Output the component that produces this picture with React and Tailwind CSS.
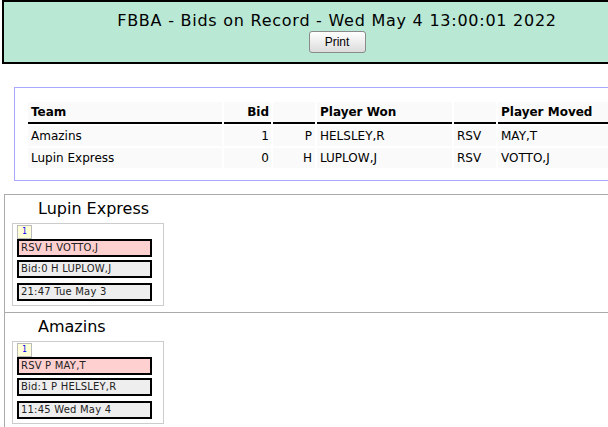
import React from 'react';

const bids = [
    { team: 'Amazins', bid: 1, pos: 'P', won: 'HELSLEY,R', type: 'RSV', moved: 'MAY,T' },
    { team: 'Lupin Express', bid: 0, pos: 'H', won: 'LUPLOW,J', type: 'RSV', moved: 'VOTTO,J' },
];

const rosters = [
    { team: 'Lupin Express', move: 'RSV H VOTTO,J', bid: 'Bid:0 H LUPLOW,J', time: '21:47 Tue May 3' },
    { team: 'Amazins', move: 'RSV P MAY,T', bid: 'Bid:1 P HELSLEY,R', time: '11:45 Wed May 4' },
];

const RosterCard = ({ r, first }) => (
    <div className={`border border-[#aaaaaa] pl-[7px] pt-[4px] pb-[6px] ${first ? '' : 'border-t-0'}`}>
        <div className="pl-[26px] text-[16px] leading-[20px] text-black">{r.team}</div>
        <div className="mt-[4px] w-[152px] border border-[#cccccc] pl-[4px] pt-[1px] pb-[4px]">
            <div className="w-[15px] h-[14px] border border-[#bbbbbb] bg-[#ffffd8] flex items-center justify-center text-[8px] leading-none text-[#0000ee] font-['DejaVu_Sans_Mono',monospace]">1</div>
            <div className="w-[135px] h-[18px] border-2 border-black bg-[#ffd0d0] px-[2px] text-[10px] leading-[14px] tracking-[0.2px] text-[#222]">{r.move}</div>
            <div className="mt-[3px] w-[135px] h-[18px] border-2 border-black bg-[#eeeeee] px-[2px] text-[10px] leading-[14px] tracking-[0.2px] text-[#222]">{r.bid}</div>
            <div className="mt-[5px] w-[135px] h-[18px] border-2 border-black bg-[#eeeeee] px-[2px] text-[10px] leading-[14px] tracking-[0.2px] text-[#222]">{r.time}</div>
        </div>
    </div>
);

export default function App() {
    return (
        <div className="w-[608px] h-[427px] overflow-hidden bg-white font-['DejaVu_Sans',sans-serif]">
            <div className="w-[700px]">
                {/* header */}
                <div className="ml-[2px] w-[670px] border-2 border-black bg-[#b9e8d5] pt-[9px] pb-[9px] flex flex-col items-center">
                    <div className="text-[16px] leading-[20px] tracking-[0.75px] text-black">FBBA - Bids on Record - Wed May 4 13:00:01 2022</div>
                    <button className="w-[57px] h-[22px] rounded-[3px] border border-[#8a8a8a] bg-gradient-to-b from-white to-[#dcdcdc] text-[12px] text-black font-['Liberation_Sans',Arial,sans-serif]">Print</button>
                </div>

                {/* bids table */}
                <div className="mt-[23px] ml-[14px] border border-[#a8a8ff] pl-[11px] pt-[12px] pb-[10px]">
                    <table className="border-separate border-spacing-[2px] text-[12px] text-black">
                        <thead>
                            <tr className="font-bold">
                                <th className="w-[194px] h-[22px] bg-[#fafafa] border-b-2 border-black px-[3px] text-left">Team</th>
                                <th className="w-[47px] bg-[#fafafa] border-b-2 border-black px-[2px] text-right">Bid</th>
                                <th className="w-[42px] bg-[#fafafa] border-b-2 border-black"></th>
                                <th className="w-[135px] bg-[#fafafa] border-b-2 border-black px-[3px] text-left">Player Won</th>
                                <th className="w-[42px] bg-[#fafafa] border-b-2 border-black"></th>
                                <th className="w-[150px] bg-[#fafafa] border-b-2 border-black px-[3px] text-left">Player Moved</th>
                            </tr>
                        </thead>
                        <tbody>
                            {bids.map((b) => (
                                <tr key={b.team} className="h-[20px]">
                                    <td className="bg-[#fafafa] px-[3px]">{b.team}</td>
                                    <td className="bg-[#fafafa] px-[2px] text-right">{b.bid}</td>
                                    <td className="bg-[#fafafa] px-[3px] text-right">{b.pos}</td>
                                    <td className="bg-[#fafafa] px-[3px]">{b.won}</td>
                                    <td className="bg-[#fafafa] px-[3px]">{b.type}</td>
                                    <td className="bg-[#fafafa] px-[3px]">{b.moved}</td>
                                </tr>
                            ))}
                        </tbody>
                    </table>
                </div>

                {/* rosters */}
                <div className="mt-[13px] ml-[4px]">
                    {rosters.map((r, i) => (
                        <RosterCard key={r.team} r={r} first={i === 0} />
                    ))}
                </div>
            </div>
        </div>
    );
}
